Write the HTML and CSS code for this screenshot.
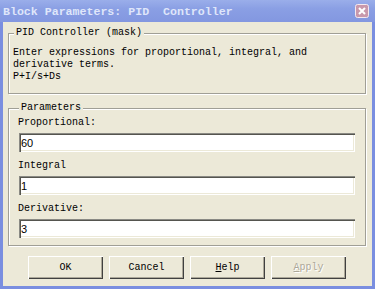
FILE: index.html
```html
<!DOCTYPE html>
<html lang="en">
<head>
    <meta charset="UTF-8">
    <title>Block Parameters: PID Controller</title>
    <link rel="stylesheet" href="styles.css">
</head>
<body>
<div class="window">
    <div class="titlebar">
        <span class="title">Block Parameters: PID  Controller</span>
        <span class="close">
            <svg width="14" height="14" viewBox="0 0 14 14">
                <rect x="0.5" y="0.5" width="13" height="13" rx="2" fill="#c898ac" stroke="#f4e8ee"/>
                <path d="M4 4 L10 10 M10 4 L4 10" stroke="#fff" stroke-width="2"/>
            </svg>
        </span>
    </div>
    <div class="client">
        <fieldset class="group mask">
            <legend>PID Controller (mask)</legend>
            <div class="desc">Enter expressions for proportional, integral, and<br>derivative terms.<br>P+I/s+Ds</div>
        </fieldset>

        <fieldset class="group params">
            <legend>Parameters</legend>
            <label class="field-label">Proportional:</label>
            <input class="field" type="text" value="60">
            <label class="field-label">Integral</label>
            <input class="field" type="text" value="1">
            <label class="field-label">Derivative:</label>
            <input class="field" type="text" value="3">
        </fieldset>

        <div class="buttons">
            <button class="btn">OK</button>
            <button class="btn">Cancel</button>
            <button class="btn"><u>H</u>elp</button>
            <button class="btn disabled"><u>A</u>pply</button>
        </div>
    </div>
</div>
</body>
</html>
```

FILE: styles.css
```css
body {
    margin: 0;
    font-family: "Liberation Mono", monospace;
    font-size: 10px;
}
.window {
    width: 375px;
    height: 289px;
    box-sizing: border-box;
    background: #7a8ee0;
    padding: 0 3px 3px 3px;
    display: flex;
    flex-direction: column;
}
.titlebar {
    height: 22px;
    margin: 0 -3px;
    padding: 0 6px 0 3px;
    background: linear-gradient(to bottom, #9aaeea, #8a9fe4 40%, #8397e0);
    display: flex;
    align-items: center;
    justify-content: space-between;
}
.title {
    white-space: pre;
    font-weight: bold;
    font-size: 11.6px;
    color: #dfe6fa;
}
.close {
    display: flex;
    margin-top: -1px;
}
.client {
    flex: 1;
    background: #ece9d8;
    padding: 5px 6px 0 5px;
}
.group {
    margin: 0;
    border: 1px solid #a09f96;
    box-shadow: inset 1px 1px 0 #fff, 1px 1px 0 #fff;
    padding: 0 9px 0 4px;
}
.group legend {
    margin-left: 1px;
    padding: 0 2px;
    line-height: 12px;
    background: #ece9d8;
}
.mask {
    padding-top: 8px;
    padding-bottom: 10px;
}
.desc {
    line-height: 12px;
}
.params {
    margin-top: 8px;
    padding: 3px 9px 7px 9px;
}
.field-label {
    display: block;
    line-height: 12px;
    margin-bottom: 4px;
}
.field {
    display: block;
    box-sizing: border-box;
    width: 336px;
    height: 19px;
    margin: 0 0 8px 1px;
    padding: 0 2px;
    border: none;
    background: #fff;
    box-shadow: inset 1px 1px 0 #8a8a84, inset 2px 2px 0 #55554f, inset -1px -1px 0 #fff, inset -2px -2px 0 #ece9d8;
    font-family: "Liberation Sans", sans-serif;
    font-size: 11px;
    color: #000;
}
.field:last-child {
    margin-bottom: 0;
}
.buttons {
    margin-top: 10px;
    display: flex;
    justify-content: center;
    gap: 6px;
}
.btn {
    width: 75px;
    height: 23px;
    padding: 0;
    border: none;
    background: #ece9d8;
    box-shadow: inset 1px 1px 0 #fff, inset -1px -1px 0 #404040, inset -2px -2px 0 #aca899;
    font-family: "Liberation Mono", monospace;
    font-size: 10px;
    color: #000;
}
.btn.disabled {
    color: #aca899;
    text-shadow: 1px 1px 0 #fff;
}
```
